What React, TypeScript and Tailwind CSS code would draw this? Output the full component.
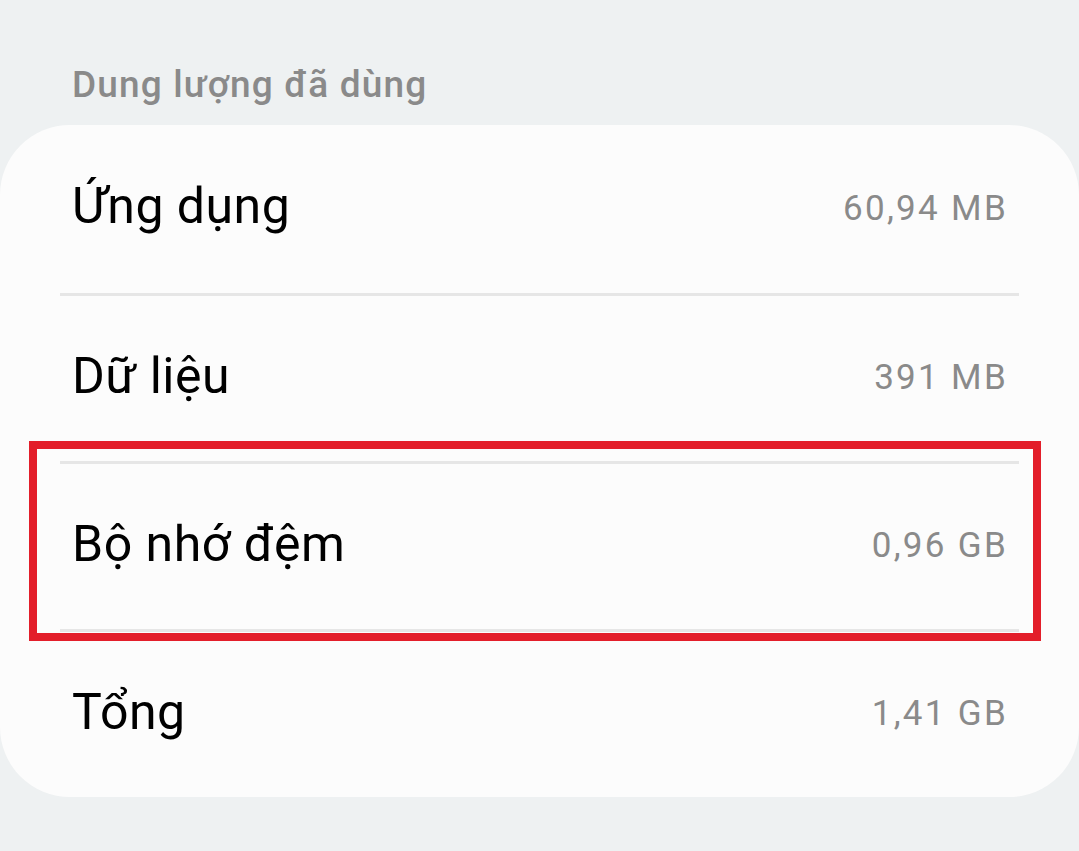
import React from "react";

const rows = [
  { label: "Ứng dụng", value: "60,94 MB" },
  { label: "Dữ liệu", value: "391 MB" },
  { label: "Bộ nhớ đệm", value: "0,96 GB" },
  { label: "Tổng", value: "1,41 GB" },
];

export default function App() {
  return (
    <div
      className="w-[1079px] h-[851px] bg-[#eef1f2] overflow-hidden"
      style={{ fontFamily: "Roboto, 'Noto Sans', sans-serif" }}
    >
      <div className="h-[125px] pl-[72px] pt-[66px]">
        <div className="text-[37px] leading-none font-medium tracking-[1.15px] text-[#8a8a8a]">
          Dung lượng đã dùng
        </div>
      </div>
      <div className="relative bg-[#fcfcfc] rounded-[70px] h-[672px] flex flex-col">
        {rows.map((r, i) => (
          <div key={r.label} className="flex flex-col">
            {i > 0 && <div className="mx-[60px] h-[3px] bg-[#e6e6e6]" />}
            <div
              className={
                (i === 0 ? "h-[168px] " : "h-[165px] ") +
                "flex items-center justify-between pl-[72px] pr-[71px]"
              }
            >
              <span className="text-[50px] text-black leading-none tracking-[0.5px] -translate-y-[3px]">
                {r.label}
              </span>
              <span className="text-[35px] text-[#8a8a8a] leading-none tracking-[2.3px] -translate-y-[1px]">
                {r.value}
              </span>
            </div>
          </div>
        ))}
        <div className="absolute left-[29px] top-[316px] w-[1012px] h-[200px] border-[8px] border-[#e31e2a]" />
      </div>
    </div>
  );
}
